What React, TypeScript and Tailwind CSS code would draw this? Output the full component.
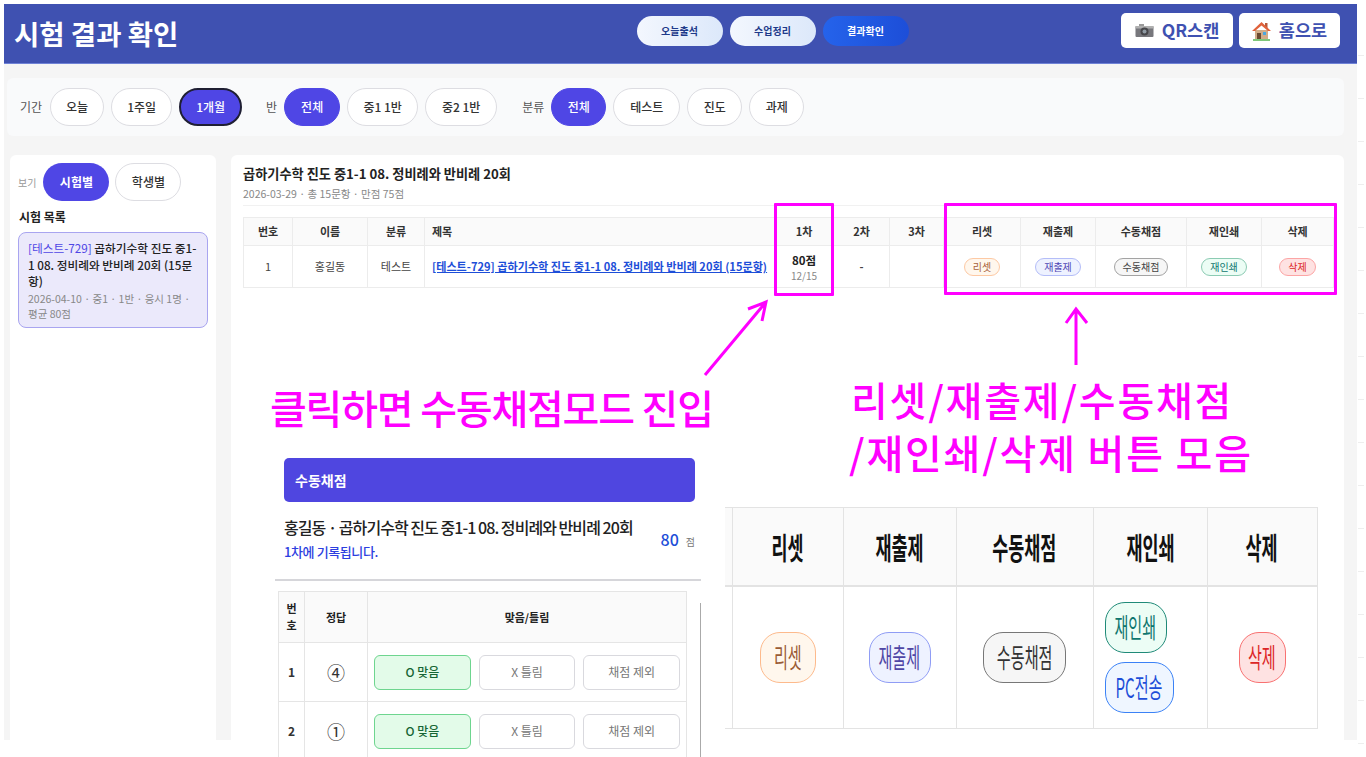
import React from "react";

const FONT = "font-['Noto_Sans_CJK_KR','Noto_Sans',sans-serif]";

function Pill({ label, w, on, dark }: { label: string; w: string; on?: boolean; dark?: boolean }) {
  return (
    <button
      className={`h-[38px] ${w} rounded-[19px] text-[12px] font-medium border ${
        on
          ? `bg-[#4f46e5] text-white ${dark ? "border-2 border-[#1f1f33]" : "border-[#4f46e5]"}`
          : "bg-white text-[#333] border-[#dddde2]"
      }`}
    >
      {label}
    </button>
  );
}

function NavPill({ label, on }: { label: string; on?: boolean }) {
  return (
    <button
      className={`w-[86px] h-[30px] rounded-[15px] text-[10px] font-bold ${
        on
          ? "bg-gradient-to-r from-[#2563eb] to-[#1d4ed8] text-white"
          : "bg-gradient-to-r from-[#f3f7fe] to-[#dce8fa] text-[#1e3a8a]"
      }`}
    >
      {label}
    </button>
  );
}

function Camera() {
  return (
    <svg width="19" height="15" viewBox="0 0 19 15">
      <rect x="4" y="1" width="5" height="3" fill="#9a9a9a" />
      <rect x="0.5" y="3" width="18" height="11" rx="1" fill="#77777c" />
      <rect x="0.5" y="3" width="18" height="2.5" fill="#b0b0b0" />
      <circle cx="9.5" cy="8.5" r="4" fill="#46464a" />
      <circle cx="9.5" cy="8.5" r="2" fill="#8f9aa3" />
    </svg>
  );
}

function House() {
  return (
    <svg width="19" height="20" viewBox="0 0 19 20">
      <rect x="3" y="9" width="13" height="9" fill="#d2ad88" />
      <rect x="5" y="12" width="4" height="6" fill="#6b4a30" />
      <rect x="11" y="11" width="3" height="3" fill="#4aa8e0" />
      <rect x="13" y="2" width="2.5" height="5" fill="#b5583a" />
      <path d="M9.5 1 L19 10 L16 10 L9.5 4.5 L3 10 L0 10 Z" fill="#e0623c" />
      <rect x="1" y="18" width="17" height="2" fill="#7fc77a" />
    </svg>
  );
}

function SmallBtn({ label, cls }: { label: string; cls: string }) {
  return <span className={`inline-block h-[18px] leading-[16px] px-[8px] rounded-[9px] border text-[10px] ${cls}`}>{label}</span>;
}

function BigBtn({ label, cls }: { label: string; cls: string }) {
  return (
    <span className={`flex items-center justify-center h-[51px] rounded-[20px] border whitespace-nowrap ${cls}`}>
      <span className="inline-block text-[27px] scale-x-[0.56]">{label}</span>
    </span>
  );
}

const thCls = "border border-[#ececec] bg-[#fafafa] text-[11px] font-bold text-[#333]";
const tdCls = "border border-[#ececec] text-[11px] text-[#444] text-center";

function ExamTable() {
  return (
    <table className="w-[1090px] table-fixed border-collapse">
      <colgroup>
        <col className="w-[49px]" />
        <col className="w-[75px]" />
        <col className="w-[57px]" />
        <col className="w-[350px]" />
        <col className="w-[59px]" />
        <col className="w-[56px]" />
        <col className="w-[54px]" />
        <col className="w-[77px]" />
        <col className="w-[75px]" />
        <col className="w-[91px]" />
        <col className="w-[75px]" />
        <col className="w-[72px]" />
      </colgroup>
      <thead>
        <tr className="h-[28px]">
          {["번호", "이름", "분류"].map((h) => (
            <th key={h} className={thCls}>{h}</th>
          ))}
          <th className={`${thCls} text-left pl-[7px]`}>제목</th>
          {["1차", "2차", "3차", "리셋", "재출제", "수동채점", "재인쇄", "삭제"].map((h) => (
            <th key={h} className={thCls}>{h}</th>
          ))}
        </tr>
      </thead>
      <tbody>
        <tr className="h-[42px]">
          <td className={tdCls}>1</td>
          <td className={tdCls}>홍길동</td>
          <td className={tdCls}>테스트</td>
          <td className={`${tdCls} text-left pl-[7px]`}>
            <span className="text-[11.1px] font-bold text-[#1d4ed8] underline whitespace-nowrap">
              [테스트-729] 곱하기수학 진도 중1-1 08. 정비례와 반비례 20회 (15문항)
            </span>
          </td>
          <td className={tdCls}>
            <div className="text-[11.5px] font-bold text-[#222] leading-[16px]">80점</div>
            <div className="mt-[1px] text-[10px] text-[#888] leading-[13px]">12/15</div>
          </td>
          <td className={`${tdCls} font-bold`}>-</td>
          <td className={tdCls}></td>
          <td className={tdCls}><SmallBtn label="리셋" cls="bg-[#fff7ed] border-[#fdc9a4] text-[#a8623a]" /></td>
          <td className={tdCls}><SmallBtn label="재출제" cls="bg-[#eef2ff] border-[#b4bdf8] text-[#4f46b5]" /></td>
          <td className={tdCls}><SmallBtn label="수동채점" cls="bg-[#f6f6f6] border-[#a3a3a3] text-[#444]" /></td>
          <td className={tdCls}><SmallBtn label="재인쇄" cls="bg-[#ecfdf5] border-[#8ccbb3] text-[#0f766e]" /></td>
          <td className={tdCls}><SmallBtn label="삭제" cls="bg-[#fee2e2] border-[#fca5a5] text-[#dc2626]" /></td>
        </tr>
      </tbody>
    </table>
  );
}

function GradeRow({ no, answer }: { no: number; answer: string }) {
  return (
    <tr className="h-[59px]">
      <td className="border border-[#e5e5e5] text-center text-[12px] font-bold text-[#333]">{no}</td>
      <td className="border border-[#e5e5e5] text-center text-[18px] text-[#333]">{answer}</td>
      <td className="border border-[#e5e5e5] px-[6px]">
        <div className="flex gap-[8px]">
          <span className="w-[97px] h-[35px] flex items-center justify-center rounded-[6px] border border-[#6ed58f] bg-[#e3fbe9] text-[12px] font-medium text-[#166534]">O 맞음</span>
          <span className="w-[97px] h-[35px] flex items-center justify-center rounded-[6px] border border-[#d9d9de] bg-white text-[12px] text-[#777]">X 틀림</span>
          <span className="w-[97px] h-[35px] flex items-center justify-center rounded-[6px] border border-[#d9d9de] bg-white text-[12px] text-[#777]">채점 제외</span>
        </div>
      </td>
    </tr>
  );
}

// pasted capture of the grading modal
function GradingCapture() {
  return (
    <div className="absolute left-[275px] top-[450px] w-[426px] h-[307px] bg-white overflow-hidden">
      <div className="ml-[9px] mt-[8px] w-[411px] h-[44px] rounded-[5px] bg-[#4f46e0] flex items-center pl-[11px] text-[14px] font-bold text-white">
        수동채점
      </div>
      <div className="ml-[9px] mr-[6px] mt-[13px] flex items-end justify-between">
        <div>
          <div className="text-[16px] font-medium leading-[24px] text-[#222] tracking-[-0.95px]">홍길동 · 곱하기수학 진도 중1-1 08. 정비례와 반비례 20회</div>
          <div className="mt-[4px] text-[13px] font-medium leading-[18px] text-[#2d3fe0] tracking-[-0.4px]">1차에 기록됩니다.</div>
        </div>
        <div className="flex items-baseline gap-[7px] mb-[10px]">
          <span className="text-[16px] font-medium text-[#1d4ed8]">80</span>
          <span className="text-[10px] text-[#777]">점</span>
        </div>
      </div>
      <div className="mt-[18px] h-[2px] bg-[#d6d6da]" />
      <table className="ml-[3px] mt-[10px] w-[409px] table-fixed border-collapse">
        <colgroup>
          <col className="w-[26px]" />
          <col className="w-[63px]" />
          <col />
        </colgroup>
        <thead>
          <tr className="h-[51px] bg-[#fafafa]">
            <th className="border border-[#e5e5e5] text-[11px] font-bold leading-[17px] text-[#222]">번<br />호</th>
            <th className="border border-[#e5e5e5] text-[11px] font-bold text-[#222]">정답</th>
            <th className="border border-[#e5e5e5] text-[11px] font-bold text-[#222]">맞음/틀림</th>
          </tr>
        </thead>
        <tbody>
          <GradeRow no={1} answer="④" />
          <GradeRow no={2} answer="①" />
        </tbody>
      </table>
      <div className="absolute left-[425px] top-[153px] w-[1px] h-[154px] bg-[#aaa]" />
    </div>
  );
}

function CaptureHead({ label }: { label: string }) {
  return (
    <th className="border border-[#e3e3e3] border-b-2 bg-[#fafafa] font-bold text-[#111]">
      <span className="inline-block whitespace-nowrap text-[30px] scale-x-[0.58]">{label}</span>
    </th>
  );
}

// pasted enlargement of the button columns
function ButtonsCapture() {
  const cell = "border border-[#e3e3e3]";
  return (
    <div className="absolute left-[725px] top-[490px] w-[600px] h-[250px] bg-white">
      <table className="mt-[17px] w-[592px] table-fixed border-collapse">
        <colgroup>
          <col className="w-[7px]" />
          <col className="w-[111px]" />
          <col className="w-[113px]" />
          <col className="w-[137px]" />
          <col className="w-[114px]" />
          <col className="w-[110px]" />
        </colgroup>
        <thead>
          <tr className="h-[78px]">
            <th className="border border-l-0 border-b-2 border-[#e3e3e3] bg-[#fafafa]" />
            {["리셋", "재출제", "수동채점", "재인쇄", "삭제"].map((h) => (
              <CaptureHead key={h} label={h} />
            ))}
          </tr>
        </thead>
        <tbody>
          <tr className="h-[143px]">
            <td className="border border-l-0 border-[#e3e3e3]" />
            <td className={cell}>
              <div className="w-[56px] mx-auto"><BigBtn label="리셋" cls="bg-[#fff7ed] border-[#fdba8c] text-[#9a5b34]" /></div>
            </td>
            <td className={cell}>
              <div className="w-[62px] mx-auto"><BigBtn label="재출제" cls="bg-[#eef2ff] border-[#8f9cf5] text-[#4f46a5]" /></div>
            </td>
            <td className={cell}>
              <div className="w-[83px] mx-auto"><BigBtn label="수동채점" cls="bg-[#f6f6f6] border-[#777] text-[#333]" /></div>
            </td>
            <td className={cell}>
              <div className="flex flex-col gap-[9px] pl-[11px]">
                <div className="w-[62px]"><BigBtn label="재인쇄" cls="bg-[#ecfdf5] border-[#1f8a78] text-[#0f766e]" /></div>
                <div className="w-[69px]"><BigBtn label="PC전송" cls="bg-[#eff6ff] border-[#3b82f6] text-[#1d4ed8]" /></div>
              </div>
            </td>
            <td className={cell}>
              <div className="w-[47px] mx-auto"><BigBtn label="삭제" cls="bg-[#fee2e2] border-[#f87171] text-[#dc2626]" /></div>
            </td>
          </tr>
        </tbody>
      </table>
    </div>
  );
}

function Annotations() {
  const txt = "absolute whitespace-nowrap text-[#ff00ff] text-[40px] leading-[48px] font-medium";
  return (
    <>
      <div className="absolute left-[774px] top-[203px] w-[60px] h-[93px] border-[3px] border-[#ff00ff] rounded-[1px]" />
      <div className="absolute left-[944px] top-[203px] w-[393px] h-[92px] border-[3px] border-[#ff00ff] rounded-[1px]" />
      <svg className="absolute left-0 top-0" width="1366" height="757" fill="none" stroke="#ff00ff" strokeWidth="3">
        <path d="M705 375 L766 302 M748 309 L766 302 L762 321" />
        <path d="M1076 365 L1076 309 M1066 323 L1076 309 L1087 323" />
      </svg>
      <div className={`${txt} left-[270px] top-[383px] tracking-[-1.2px]`}>클릭하면 수동채점모드 진입</div>
      <div className={`${txt} left-[851px] top-[375px] tracking-[1.8px]`}>리셋/재출제/수동채점</div>
      <div className={`${txt} left-[849px] top-[428px] tracking-[1.8px]`}>/재인쇄/삭제 버튼 모음</div>
    </>
  );
}

const STRIP = [0, 1, 2, 3, 4, 5, 6, 7, 8, 9, 10, 11, 12, 13, 14, 15, 16];

export default function App() {
  return (
    <div className={`relative w-[1366px] h-[757px] overflow-hidden bg-white flex ${FONT}`}>
      <div className="ml-[4px] mt-[4px] w-[1353px] h-[736px] shrink-0 bg-[#f5f5f5] flex flex-col">
        <header className="h-[60px] shrink-0 bg-[#3f51b1] border-b border-[#6f82d6] flex items-center justify-between pl-[10px] pr-[17px]">
          <h1 className="w-[424px] text-[27.5px] font-bold text-white">시험 결과 확인</h1>
          <nav className="flex gap-[7px] mb-[6px] -ml-[14px]">
            <NavPill label="오늘출석" />
            <NavPill label="수업정리" />
            <NavPill label="결과확인" on />
          </nav>
          <div className="flex gap-[6px] mb-[6px]">
            <button className="w-[112px] h-[35px] rounded-[5px] bg-white flex items-center justify-center gap-[8px] text-[17.5px] font-semibold text-[#3f51b1]">
              <Camera />QR스캔
            </button>
            <button className="w-[101px] h-[35px] rounded-[5px] bg-white flex items-center justify-center gap-[8px] text-[17.5px] font-semibold text-[#3f51b1]">
              <House />홈으로
            </button>
          </div>
        </header>

        <section className="ml-[3px] mt-[14px] w-[1337px] h-[58px] shrink-0 rounded-[6px] bg-[#f9fafb] flex items-center pl-[13px]">
          <span className="text-[12px] text-[#555] mr-[8px]">기간</span>
          <div className="flex gap-[7px]">
            <Pill label="오늘" w="w-[54px]" />
            <Pill label="1주일" w="w-[61px]" />
            <Pill label="1개월" w="w-[63px]" on dark />
          </div>
          <span className="ml-[24px] mr-[7px] text-[12px] text-[#555]">반</span>
          <div className="flex gap-[7px]">
            <Pill label="전체" w="w-[56px]" on />
            <Pill label="중1 1반" w="w-[71px]" />
            <Pill label="중2 1반" w="w-[72px]" />
          </div>
          <span className="ml-[25px] mr-[7px] text-[12px] text-[#555]">분류</span>
          <div className="flex gap-[7px]">
            <Pill label="전체" w="w-[55px]" on />
            <Pill label="테스트" w="w-[67px]" />
            <Pill label="진도" w="w-[55px]" />
            <Pill label="과제" w="w-[55px]" />
          </div>
        </section>

        <div className="flex flex-1 mt-[19px] ml-[6px] gap-[15px]">
          <aside className="w-[206px] rounded-t-[6px] bg-white px-[8px] pt-[8px]">
            <div className="flex items-center">
              <span className="text-[10px] text-[#999] mr-[7px]">보기</span>
              <div className="flex gap-[6px]">
                <button className="w-[66px] h-[38px] rounded-[19px] bg-[#4f46e5] text-[12px] font-bold text-white">시험별</button>
                <button className="w-[66px] h-[38px] rounded-[19px] bg-white border border-[#dddde2] text-[12px] font-medium text-[#333]">학생별</button>
              </div>
            </div>
            <div className="mt-[7px] ml-[1px] text-[12px] font-bold text-[#222] leading-[18px]">시험 목록</div>
            <div className="mt-[6px] w-[190px] h-[96px] rounded-[8px] border border-[#a9a5f0] bg-[#ebe9fb] px-[9px] pt-[7px]">
              <div className="text-[11.7px] leading-[16.5px] font-medium text-[#222]">
                <span className="font-normal text-[#4f46e5]">[테스트-729]</span> 곱하기수학 진도 중1-1 08. 정비례와 반비례 20회 (15문항)
              </div>
              <div className="mt-[1px] text-[10.5px] leading-[15px] text-[#888]">2026-04-10 · 중1 · 1반 · 응시 1명 · 평균 80점</div>
            </div>
          </aside>
          <main className="w-[1113px] rounded-t-[6px] bg-white pl-[12px] pt-[10px]">
            <div className="text-[13.2px] font-bold text-[#222] leading-[18px]">곱하기수학 진도 중1-1 08. 정비례와 반비례 20회</div>
            <div className="mt-[3px] text-[10.5px] text-[#888] leading-[15px]">2026-03-29 · 총 15문항 · 만점 75점</div>
            <div className="mt-[4px] mr-[9px] h-[1px] bg-[#f1f1f1]" />
            <div className="mt-[9px] pt-[2px]">
              <ExamTable />
            </div>
          </main>
        </div>
      </div>

      <div className="ml-[1px] w-[6px] pt-[55px] flex flex-col gap-[42px]">
        {STRIP.map((i) => (
          <div key={i} className="h-[1px] shrink-0 bg-[#eeeeee]" />
        ))}
      </div>

      <GradingCapture />
      <ButtonsCapture />
      <Annotations />
    </div>
  );
}
